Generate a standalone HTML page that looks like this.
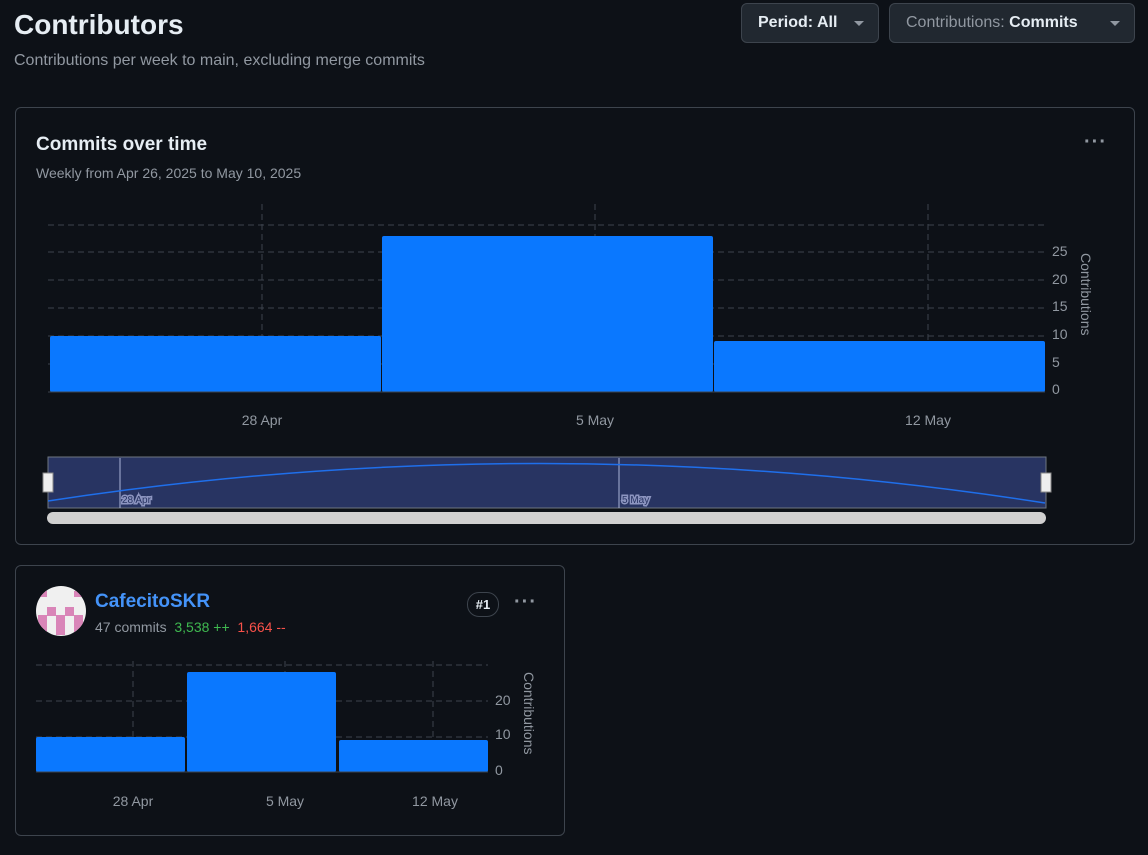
<!DOCTYPE html>
<html><head><meta charset="utf-8"><style>
body{margin:0;background:#0d1117;font-family:"Liberation Sans",sans-serif;color:#e6edf3;width:1148px;height:855px;overflow:hidden;position:relative}
.a{position:absolute}
.btn{position:absolute;top:3px;height:40px;border:1px solid #3d444d;background:#212830;border-radius:6px;box-sizing:border-box;font-size:16px;line-height:38px;padding-left:16px;color:#e6edf3}
.card{position:absolute;border:1px solid #3d444d;border-radius:6px;box-sizing:border-box}
.dots{position:absolute;color:#9198a1;font-size:20px;letter-spacing:1px;font-weight:bold}
</style></head><body>
<div class="a" style="left:14px;top:9px;font-size:28px;font-weight:bold">Contributors</div>
<div class="a" style="left:14px;top:52px;font-size:16px;color:#9198a1">Contributions per week to main, excluding merge commits</div>
<div class="btn" style="left:741px;width:138px"><b>Period: All</b><span class="a" style="right:14px;top:17px;border:5px solid transparent;border-top-color:#9198a1;border-bottom:0"></span></div>
<div class="btn" style="left:889px;width:246px"><span style="color:#9198a1">Contributions:</span> <b>Commits</b><span class="a" style="right:14px;top:17px;border:5px solid transparent;border-top-color:#9198a1;border-bottom:0"></span></div>

<div class="card" style="left:15px;top:107px;width:1120px;height:438px"></div>
<div class="a" style="left:36px;top:134px;font-size:19px;font-weight:bold">Commits over time</div>
<div class="a" style="left:36px;top:165px;font-size:14px;color:#9198a1">Weekly from Apr 26, 2025 to May 10, 2025</div>
<div class="dots" style="left:1084px;top:131px">···</div>

<svg class="a" style="left:0;top:0" width="1148" height="855">
<g stroke="#3d444d" stroke-dasharray="6,4" stroke-width="1">
<line x1="48" y1="225" x2="1045" y2="225"/><line x1="48" y1="252" x2="1045" y2="252"/><line x1="48" y1="280" x2="1045" y2="280"/><line x1="48" y1="308" x2="1045" y2="308"/><line x1="48" y1="336" x2="1045" y2="336"/><line x1="48" y1="364" x2="1045" y2="364"/>
<line x1="262" y1="204" x2="262" y2="392"/><line x1="595" y1="204" x2="595" y2="392"/><line x1="928" y1="204" x2="928" y2="392"/>
<line x1="36" y1="665" x2="488" y2="665"/><line x1="36" y1="701" x2="488" y2="701"/><line x1="36" y1="737" x2="488" y2="737"/>
<line x1="133" y1="661" x2="133" y2="772"/><line x1="285" y1="661" x2="285" y2="772"/><line x1="433" y1="661" x2="433" y2="772"/>
</g>
<g fill="#0a78ff">
<rect x="50" y="336" width="331" height="56" rx="2"/><rect x="382" y="236" width="331" height="156" rx="2"/><rect x="714" y="341" width="331" height="51" rx="2"/>
<rect x="36" y="737" width="149" height="35" rx="2"/><rect x="187" y="672" width="149" height="100" rx="2"/><rect x="339" y="740" width="149" height="32" rx="2"/>
</g>
<line x1="48" y1="392" x2="1045" y2="392" stroke="#3d444d"/>
<line x1="36" y1="772" x2="488" y2="772" stroke="#3d444d"/>
<g fill="#9198a1" font-size="14">
<text x="1052" y="394">0</text><text x="1052" y="367">5</text><text x="1052" y="339">10</text><text x="1052" y="311">15</text><text x="1052" y="284">20</text><text x="1052" y="256">25</text>
<text x="262" y="425" text-anchor="middle">28 Apr</text><text x="595" y="425" text-anchor="middle">5 May</text><text x="928" y="425" text-anchor="middle">12 May</text>
<text transform="translate(1081,253) rotate(90)">Contributions</text>
<text x="495" y="775">0</text><text x="495" y="739">10</text><text x="495" y="705">20</text>
<text x="133" y="806" text-anchor="middle">28 Apr</text><text x="285" y="806" text-anchor="middle">5 May</text><text x="435" y="806" text-anchor="middle">12 May</text>
<text transform="translate(524,672) rotate(90)">Contributions</text>
</g>
<rect x="48" y="457" width="998" height="51" fill="#283462" stroke="#6e7681"/>
<line x1="120" y1="458" x2="120" y2="508" stroke="#aab4d8"/><line x1="619" y1="458" x2="619" y2="508" stroke="#aab4d8"/>
<path d="M48,501 Q545,425 1045,503" fill="none" stroke="#1f6feb" stroke-width="1.5"/>
<text x="122" y="503" font-size="10" fill="#283462" stroke="#8d95c0" stroke-width="3" paint-order="stroke">28 Apr</text>
<text x="622" y="503" font-size="10" fill="#283462" stroke="#8d95c0" stroke-width="3" paint-order="stroke">5 May</text>
<rect x="43" y="473" width="10" height="19" fill="#eee" stroke="#888"/><rect x="1041" y="473" width="10" height="19" fill="#eee" stroke="#888"/>
<rect x="47" y="512" width="999" height="12" rx="6" fill="#d0d0d0"/>
<clipPath id="c"><circle cx="61" cy="611" r="25"/></clipPath>
<circle cx="61" cy="611" r="25" fill="#f0f0f0"/>
<g fill="#d985b8" clip-path="url(#c)">
<rect x="38" y="591" width="9" height="6"/><rect x="74" y="591" width="9" height="6"/>
<rect x="47" y="607" width="9" height="9"/><rect x="65" y="607" width="9" height="9"/>
<rect x="38" y="615" width="9" height="20"/><rect x="56" y="615" width="9" height="20"/><rect x="74" y="615" width="9" height="20"/>
</g>
</svg>

<div class="card" style="left:15px;top:565px;width:550px;height:271px"></div>
<div class="a" style="left:95px;top:591px;font-size:19px;font-weight:bold;color:#4493f8">CafecitoSKR</div>
<div class="a" style="left:95px;top:619px;font-size:14px;color:#9198a1">47 commits &nbsp;<span style="color:#3fb950">3,538 ++</span> &nbsp;<span style="color:#f85149">1,664 --</span></div>
<div class="a" style="left:467px;top:592px;width:30px;height:23px;border:1px solid #3d444d;border-radius:12px;font-size:13px;font-weight:bold;text-align:center;line-height:23px">#1</div>
<div class="dots" style="left:514px;top:591px">···</div>
</body></html>
